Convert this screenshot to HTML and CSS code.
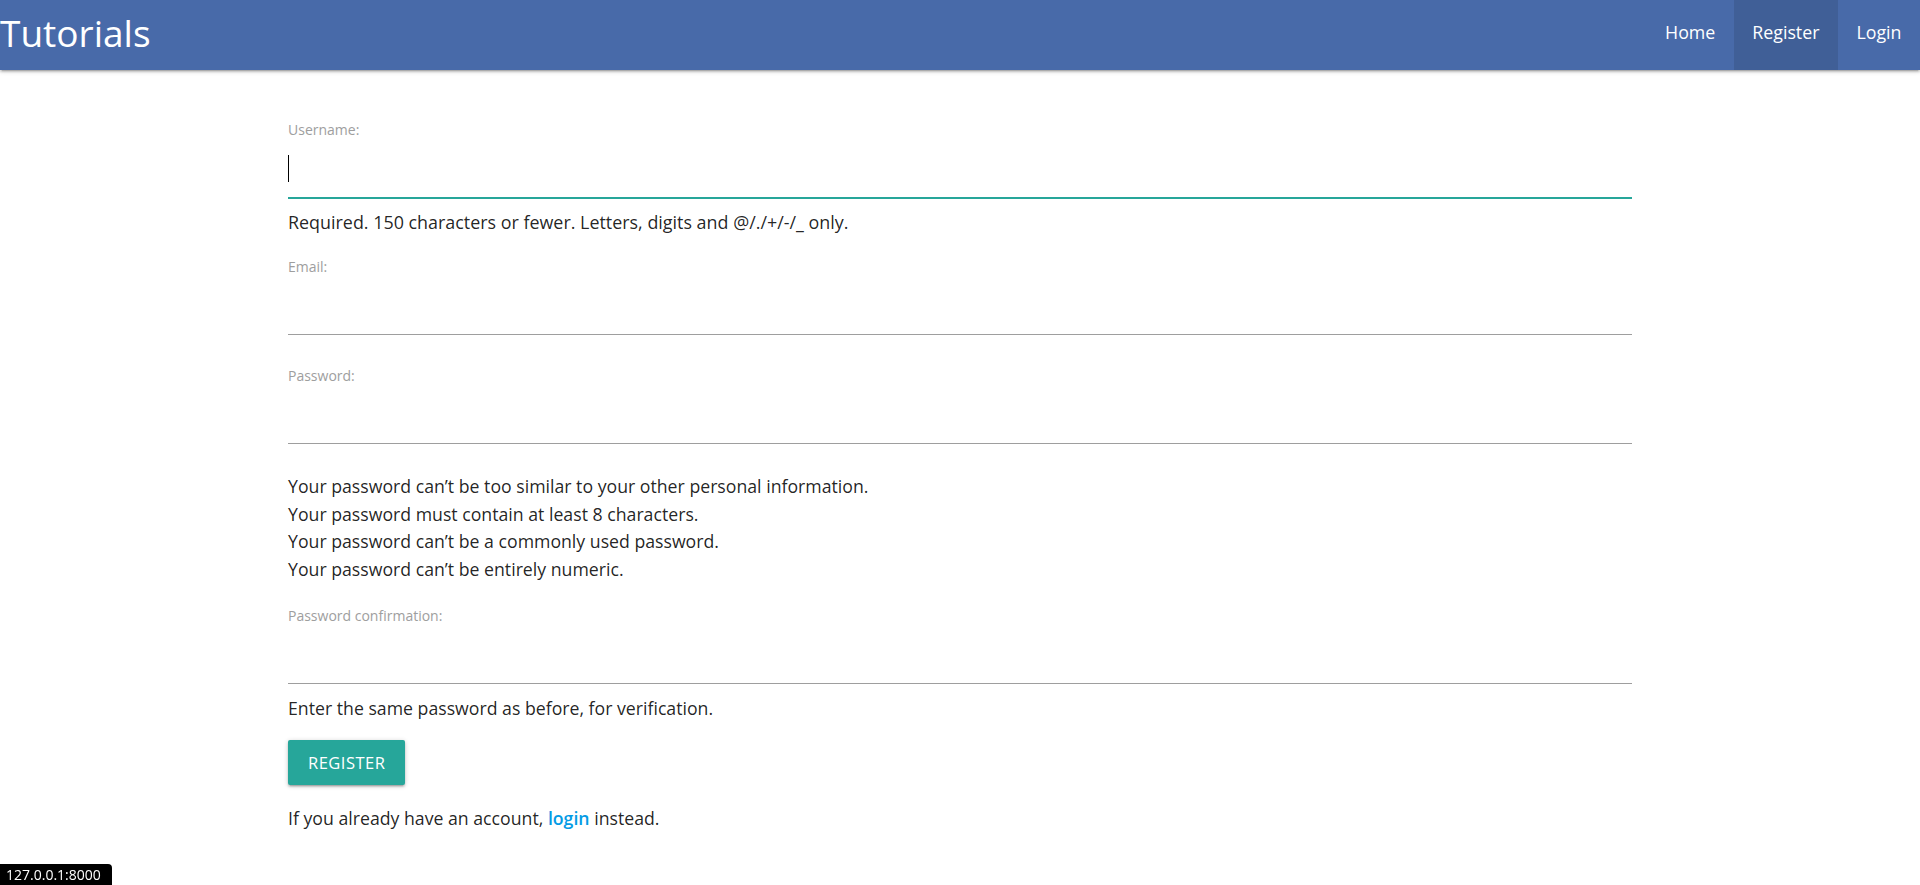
FILE: index.html
```html
<!DOCTYPE html>
<html lang="en">
<head>
<meta charset="utf-8">
<title>Register</title>
<link rel="stylesheet" href="styles.css">
</head>
<body>
<nav class="navbar">
  <a class="brand" href="#">Tutorials</a>
  <ul class="nav-links">
    <li class="nav-item"><a class="nav-link" href="#">Home</a></li>
    <li class="nav-item active"><a class="nav-link" href="#">Register</a></li>
    <li class="nav-item"><a class="nav-link" href="#">Login</a></li>
  </ul>
</nav>

<main class="container">
  <form class="register-form">
    <div class="field field-username">
      <label class="field-label" for="id_username">Username:</label>
      <div class="input-wrap">
        <input class="field-input is-focused" type="text" id="id_username" name="username" autofocus>
        <span class="fake-caret"></span>
      </div>
      <span class="helptext help-tight">Required. 150 characters or fewer. Letters, digits and @/./+/-/_ only.</span>
    </div>

    <div class="field field-email">
      <label class="field-label" for="id_email">Email:</label>
      <input class="field-input" type="email" id="id_email" name="email">
    </div>

    <div class="field field-password">
      <label class="field-label" for="id_password1">Password:</label>
      <input class="field-input" type="password" id="id_password1" name="password1">
    </div>

    <ul class="help-list">
      <li>Your password can’t be too similar to your other personal information.</li>
      <li>Your password must contain at least 8 characters.</li>
      <li>Your password can’t be a commonly used password.</li>
      <li>Your password can’t be entirely numeric.</li>
    </ul>

    <div class="field field-confirm">
      <label class="field-label" for="id_password2">Password confirmation:</label>
      <input class="field-input" type="password" id="id_password2" name="password2">
    </div>
    <span class="helptext help-confirm">Enter the same password as before, for verification.</span>

    <button class="btn" type="submit">Register</button>
  </form>

  <p class="account-note">If you already have an account, <a class="text-link" href="#">login</a> instead.</p>
</main>

<div class="status-bubble">127.0.0.1:8000</div>
</body>
</html>
```
FILE: styles.css
```css
html, body {
  margin: 0;
  padding: 0;
  background: #ffffff;
}

body {
  font-family: "Open Sans", "Noto Sans", sans-serif;
  font-size: 17.7px;
  line-height: 28px;
  color: rgba(0, 0, 0, 0.87);
}

/* ---------- navbar ---------- */
.navbar {
  display: flex;
  justify-content: space-between;
  align-items: stretch;
  height: 70px;
  background: #486aa9;
  box-shadow: 0 2px 2px 0 rgba(0, 0, 0, 0.14),
              0 3px 1px -2px rgba(0, 0, 0, 0.12),
              0 1px 5px 0 rgba(0, 0, 0, 0.2);
}

.brand {
  display: flex;
  align-items: center;
  box-sizing: border-box;
  height: 70px;
  padding: 0 0 5px 0;
  font-size: 37px;
  line-height: normal;
  color: #ffffff;
  text-decoration: none;
}

.nav-links {
  display: flex;
  margin: 0;
  padding: 0;
  list-style: none;
}

.nav-item.active {
  background: rgba(0, 0, 0, 0.1);
}

.nav-link {
  display: flex;
  align-items: center;
  box-sizing: border-box;
  height: 70px;
  padding: 0 18.5px 7px;
  font-size: 17.8px;
  line-height: normal;
  color: #ffffff;
  text-decoration: none;
}

/* ---------- form ---------- */
.container {
  width: 1344px;
  margin: 0 auto;
  padding-top: 50px;
}

.register-form {
  margin: 0;
}

.field-label {
  display: block;
  height: 20px;
  font-size: 14px;
  line-height: 20px;
  color: #9e9e9e;
}

.input-wrap {
  position: relative;
}

.fake-caret {
  position: absolute;
  left: 0;
  top: 15px;
  width: 1px;
  height: 27px;
  background: #000000;
}

.field-input {
  display: block;
  box-sizing: border-box;
  width: 100%;
  height: 58px;
  margin: 0;
  padding: 0;
  border: none;
  border-bottom: 1px solid #9e9e9e;
  border-radius: 0;
  outline: none;
  background: transparent;
  font-family: "Open Sans", "Noto Sans", sans-serif;
  font-size: 17.7px;
  color: rgba(0, 0, 0, 0.87);
  caret-color: transparent;
}

.field-input.is-focused {
  border-bottom-color: #26a69a;
  box-shadow: 0 1px 0 0 #26a69a;
}

.helptext {
  display: block;
  line-height: 28px;
}

.help-tight {
  margin-top: 10px;
  font-size: 17.9px;
}

.field-email {
  margin-top: 21px;
}

.field-password {
  margin-top: 31px;
}

.help-list {
  margin: 29px 0 0;
  padding: 0;
  list-style: none;
}

.help-list li {
  line-height: 27.7px;
}

.field-confirm {
  margin-top: 22px;
}

.help-confirm {
  margin-top: 10px;
}

.btn {
  display: block;
  height: 45px;
  margin-top: 18px;
  padding: 1px 20px 0;
  border: none;
  border-radius: 2px;
  background: #26a69a;
  color: #ffffff;
  font-family: "Open Sans", "Noto Sans", sans-serif;
  font-size: 16.5px;
  letter-spacing: 0.5px;
  text-transform: uppercase;
  line-height: 44px;
  cursor: pointer;
  box-shadow: 0 2px 2px 0 rgba(0, 0, 0, 0.14),
              0 3px 1px -2px rgba(0, 0, 0, 0.12),
              0 1px 5px 0 rgba(0, 0, 0, 0.2);
}

.account-note {
  margin: 19px 0 0;
  line-height: 28px;
}

.text-link {
  color: #039be5;
  font-weight: 600;
  text-decoration: none;
}

/* ---------- browser status bubble ---------- */
.status-bubble {
  position: fixed;
  left: 0;
  bottom: 0;
  height: 21px;
  padding: 0 11px 0 6px;
  background: #000000;
  border-top-right-radius: 4px;
  color: #ffffff;
  font-family: "Open Sans", "Noto Sans", sans-serif;
  font-size: 14px;
  line-height: 22px;
}
```
